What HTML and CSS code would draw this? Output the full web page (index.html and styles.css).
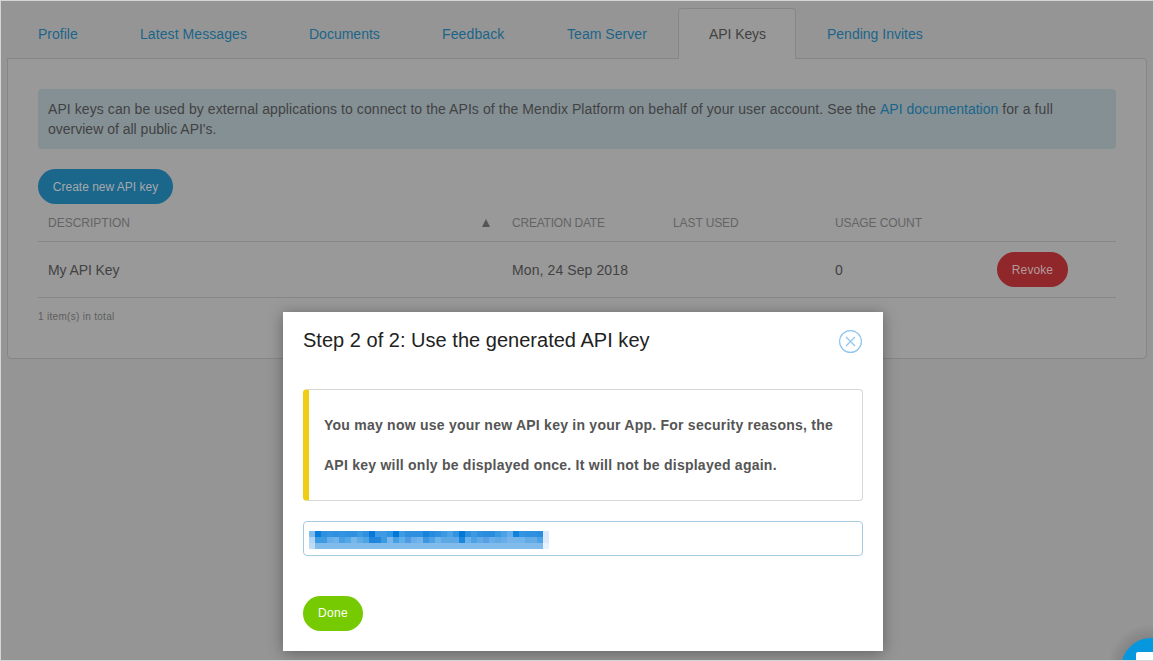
FILE: index.html
```
<!DOCTYPE html>
<html lang="en">
<head>
<meta charset="utf-8">
<title>API Keys</title>
<link rel="stylesheet" href="styles.css">
</head>
<body>
<main class="page">
  <nav class="tabs">
    <a class="tab tab-profile">Profile</a>
    <a class="tab tab-messages">Latest Messages</a>
    <a class="tab tab-documents">Documents</a>
    <a class="tab tab-feedback">Feedback</a>
    <a class="tab tab-team">Team Server</a>
    <a class="tab tab-keys active">API Keys</a>
    <a class="tab tab-invites">Pending Invites</a>
  </nav>
  <section class="panel">
    <p class="info"><span class="lead">API keys can be used by external applications to connect to the APIs of the Mendix Platform on behalf of your user account. See the </span><a class="link">API documentation</a><span class="lead"> for a full</span><br>overview of all public API's.</p>
    <button class="btn btn-create">Create new API key</button>
    <div class="row head">
      <div class="cell sorted"><span>DESCRIPTION</span><svg class="sort" width="8" height="8" viewBox="0 0 8 8"><path d="M4 0L8 8H0Z"/></svg></div>
      <div class="cell created">CREATION DATE</div>
      <div class="cell used">LAST USED</div>
      <div class="cell used">USAGE COUNT</div>
      <div class="cell"></div>
    </div>
    <div class="row item">
      <div class="cell name">My API Key</div>
      <div class="cell date">Mon, 24 Sep 2018</div>
      <div class="cell"></div>
      <div class="cell">0</div>
      <div class="cell"><button class="btn btn-revoke">Revoke</button></div>
    </div>
    <div class="total">1 item(s) in total</div>
  </section>
</main>
<div class="modal">
  <header class="modal-head">
    <h1 class="title">Step 2 of 2: Use the generated API key</h1>
    <svg class="close" width="24" height="24" viewBox="0 0 24 24"><circle cx="11.5" cy="11.5" r="10.9"/><path d="M7 7L16 16M16 7L7 16"/></svg>
  </header>
  <div class="notice">You may now use your new API key in your App. For security reasons, the<br>API key will only be displayed once. It will not be displayed again.</div>
  <div class="field">
    <svg class="mosaic" width="240" height="18" viewBox="0 0 40 3" shape-rendering="crispEdges"></svg>
  </div>
  <button class="btn btn-done">Done</button>
</div>
<svg class="chat" width="54" height="43" viewBox="0 0 54 43">
  <defs><radialGradient id="glow" gradientUnits="userSpaceOnUse" cx="51" cy="50" r="44"><stop offset="0.66" stop-opacity="0.12"/><stop offset="1" stop-opacity="0"/></radialGradient></defs>
  <path d="M0 0H54V43H0Z" fill="url(#glow)"/>
  <path d="M22 43A30 30 0 0 1 54 20.2V43Z" fill="#0697df"/>
  <path d="M36 43V36Q36 34 38 34H54V43Z" fill="#fff"/>
</svg>
<div class="frame"></div>
<script src="mosaic.js"></script>
</body>
</html>
```
FILE: styles.css
```
* { box-sizing: border-box; }
body {
  margin: 0;
  width: 1154px;
  height: 661px;
  overflow: hidden;
  position: relative;
  background: #959595;
  color: #424242;
  font: 14px/20px "Liberation Sans", Arial, sans-serif;
}
.page { padding: 8px 7px 0; }
.tabs { display: flex; height: 50px; }
.tab {
  height: 50px;
  padding: 15px 0 0 30px;
  border: 1px solid transparent;
  border-bottom: 0;
  color: #1b658a;
  white-space: nowrap;
}
.tab-profile { width: 102px; }
.tab-messages { width: 169px; letter-spacing: 0.08px; }
.tab-documents { width: 133px; }
.tab-feedback { width: 125px; letter-spacing: 0.12px; }
.tab-team { width: 142px; letter-spacing: 0.05px; }
.tab-keys { width: 118px; }
.tab-invites { width: 160px; }
.tab.active {
  height: 51px;
  background: #999;
  border-color: #868686;
  border-radius: 4px 4px 0 0;
  color: #424242;
  letter-spacing: -0.08px;
  position: relative;
}
.panel {
  height: 301px;
  padding: 30px;
  background: #999;
  border: 1px solid #868686;
  border-radius: 0 4px 4px 4px;
}
.info {
  margin: 0 0 20px;
  height: 60px;
  padding: 10px;
  border-radius: 4px;
  background: #859095;
  white-space: nowrap;
}
.lead { letter-spacing: 0.077px; }
.link { color: #1b658a; }
.btn {
  display: block;
  height: 35px;
  padding: 0;
  border: 0;
  border-radius: 18px;
  font: 12px/35px "Liberation Sans", Arial, sans-serif;
  color: #a5a9ab;
}
.btn-create { width: 135px; padding-top: 1px; background: #1b668b; }
.btn-revoke { width: 71px; padding-top: 1px; background: #8f272b; color: #b39a9b; letter-spacing: 0.1px; }
.row { display: grid; grid-template-columns: 464px 161px 162px 162px 1fr; border-bottom: 1px solid #868686; }
.head { height: 38px; font-size: 12px; color: #646464; }
.head .cell { padding: 9px 10px 0; }
.created { letter-spacing: -0.22px; }
.used { letter-spacing: -0.1px; }
.sorted { display: flex; justify-content: space-between; }
.sort { margin: 6px 2px 0 0; fill: #555; }
.item { height: 56px; align-items: center; }
.item .cell { padding: 0 10px; }
.name { letter-spacing: -0.1px; }
.date { letter-spacing: 0.1px; }
.total { margin-top: 9px; font-size: 10px; letter-spacing: 0.3px; color: #5d5d5d; }
.modal {
  position: absolute;
  left: 283px;
  top: 312px;
  width: 600px;
  height: 339px;
  padding: 14px 20px 20px;
  background: #fff;
  box-shadow: 0 2px 14px rgba(0, 0, 0, 0.35);
}
.modal-head { display: flex; justify-content: space-between; height: 63px; }
.title { margin: 0; font-size: 20px; line-height: 28px; font-weight: 400; letter-spacing: 0.02px; color: #222; }
.close { margin: 4px 0 0; fill: none; stroke: #8fc5ef; stroke-width: 1.2; }
.notice {
  height: 112px;
  padding: 15px 14px 15px 15px;
  border: 1px solid #d7d7d7;
  border-left: 6px solid #f0cd12;
  border-radius: 4px;
  font-weight: 700;
  line-height: 40px;
  letter-spacing: 0.24px;
  color: #555;
  white-space: nowrap;
}
.field {
  margin: 20px 0 40px;
  height: 35px;
  padding: 9px 5px;
  border: 1px solid #a9cbdf;
  border-radius: 4px;
}
.mosaic { display: block; }
.btn-done { width: 60px; background: #76ca02; color: #fff; letter-spacing: 0.3px; }
.chat { position: absolute; right: 0; bottom: 0; }
.frame { position: absolute; left: 0; top: 0; width: 1154px; height: 661px; border: 1px solid #d5d5d5; }
```
FILE: mosaic.js
```
// Colour cells of the obscured key, one array per row of 40 cells.
const rows = [
  "80bbea 087cdb 2e90df 3293e0 2e90df 3293e0 2e90df 2e90df 3b99e2 2e90df 0878d8 3e9be3 3e9be3 2e95e2 0278d8 3e9be3 2e90df 2e90df 2e90df 1684dc 268bde 2e90df 3b99e2 4ba3e5 3293e0 0076d7 2e90df 3b99e2 2e90df 2a8cdd 2a8cdd 3b99e2 4ba3e5 62aeea 0f82dc 3293e0 2e90df 2e90df 2a8cdd dde8f9",
  "b5d6f3 3e9ae1 3e9ae1 67aee8 70b3ea 47a0e3 55a8e6 76b6ea 5fabe6 4fa4e4 1d86dc 2486d9 3a9ae2 7ab6ea 459fe3 5eb0ea 5299e2 68afea 72b4ea 3e95e0 4fa2e4 6cb3e9 5fa8e6 5fa8e6 5fa8e6 1d87dc 6ab1ea 4ba3e5 5eabe8 5a9fe4 68aee9 5faae6 66aee9 7ab3ea 74b4ea 6fb5e9 63aae8 66aae6 4ba3e5 dde8f9",
  "bfdcf5 " + "81bbeb ".repeat(38) + "e8f2fc"
];
const svg = document.querySelector(".mosaic");
rows.forEach((row, y) => row.split(" ").forEach((color, x) => {
  const cell = document.createElementNS("http://www.w3.org/2000/svg", "rect");
  cell.setAttribute("x", x);
  cell.setAttribute("y", y);
  cell.setAttribute("width", 1);
  cell.setAttribute("height", 1);
  cell.setAttribute("fill", "#" + color);
  svg.appendChild(cell);
}));
```
